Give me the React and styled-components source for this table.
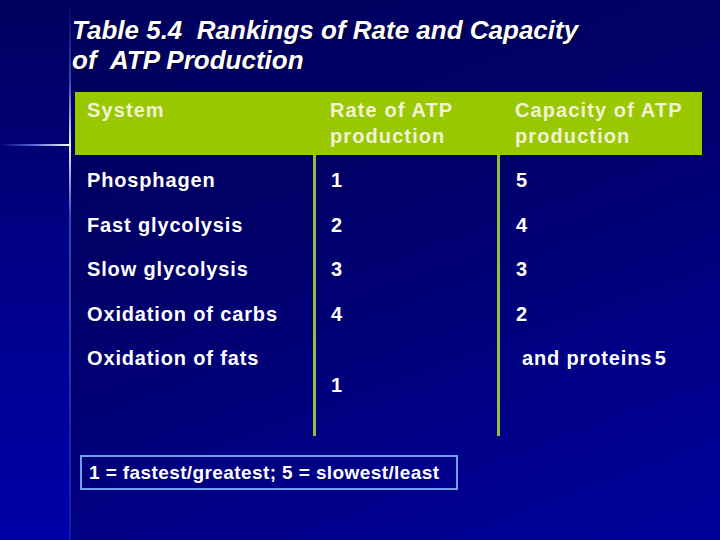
import React from 'react';
import styled, { createGlobalStyle } from 'styled-components';

const GlobalStyle = createGlobalStyle`
    html, body {
        margin: 0;
        padding: 0;
    }
    body {
        font-family: "Liberation Sans", Arial, sans-serif;
        background: #00006a;
    }
`;

const rows = [
    { system: 'Phosphagen', rate: '1', capacity: '5' },
    { system: 'Fast glycolysis', rate: '2', capacity: '4' },
    { system: 'Slow glycolysis', rate: '3', capacity: '3' },
    { system: 'Oxidation of carbs', rate: '4', capacity: '2' },
];

const App = () => {
    return (
        <>
            <GlobalStyle />
            <Slide>
                <Strip />
                <Main>
                    <Title>
                        Table 5.4&nbsp; Rankings of Rate and Capacity
                        <br />
                        of&nbsp; ATP Production
                    </Title>
                    <Table>
                        <HeadCell>System</HeadCell>
                        <HeadCell $pad={15}>
                            Rate of ATP
                            <br />
                            production
                        </HeadCell>
                        <HeadCell $pad={16}>
                            Capacity of ATP
                            <br />
                            production
                        </HeadCell>

                        {rows.map((r) => (
                            <React.Fragment key={r.system}>
                                <Cell>{r.system}</Cell>
                                <Cell $pad={15} $line>
                                    {r.rate}
                                </Cell>
                                <Cell $pad={16} $line>
                                    {r.capacity}
                                </Cell>
                            </React.Fragment>
                        ))}

                        <Cell $last>Oxidation of fats</Cell>
                        <Cell $pad={15} $line $last $top={41}>
                            1
                        </Cell>
                        <Cell $pad={22} $line $last>
                            and proteins&#8202;5
                        </Cell>
                    </Table>
                    <Legend>1 = fastest/greatest; 5 = slowest/least</Legend>
                </Main>
            </Slide>
        </>
    );
};

const Slide = styled.div`
    width: 720px;
    height: 540px;
    overflow: hidden;
    display: flex;
    background: linear-gradient(160deg, #00005c 0%, #000068 40%, #000088 75%, #00009a 100%);
`;

const Strip = styled.div`
    position: relative;
    flex: 0 0 70px;
    background: linear-gradient(180deg, #00005e 0%, #000084 45%, #0000a8 100%);

    /* glowing cross */
    &::before {
        content: '';
        position: absolute;
        right: -1px;
        top: 0;
        bottom: 0;
        width: 2px;
        background: linear-gradient(
            180deg,
            rgba(90, 120, 255, 0) 0%,
            rgba(110, 140, 255, 0.5) 15%,
            rgba(240, 240, 255, 1) 27%,
            rgba(110, 140, 255, 0.5) 40%,
            rgba(60, 80, 240, 0.3) 100%
        );
    }
    &::after {
        content: '';
        position: absolute;
        left: 0;
        right: -1px;
        top: 144px;
        height: 2px;
        background: linear-gradient(90deg, rgba(60, 90, 255, 0) 0%, rgba(120, 150, 255, 0.75) 50%, #ffffff 100%);
    }
`;

const Main = styled.div`
    flex: 1;
    display: flex;
    flex-direction: column;
    align-items: flex-start;
    padding: 15px 0 0 2px;
`;

const Title = styled.h1`
    margin: 0;
    font-family: "Liberation Sans", Arial, sans-serif;
    font-size: 26px;
    line-height: 30px;
    font-weight: bold;
    font-style: italic;
    color: #ffffff;
    text-shadow: 1px 1px 1px rgba(0, 0, 0, 0.6);
    white-space: nowrap;
`;

const Table = styled.div`
    margin: 17px 0 0 3px;
    display: grid;
    grid-template-columns: 240px 184px 203px;
    font-size: 20px;
    font-weight: bold;
`;

const HeadCell = styled.div`
    background: #99c800;
    color: #f2f2d6;
    height: 63px;
    box-sizing: border-box;
    padding: 5px 0 0 ${(p) => p.$pad || 12}px;
    line-height: 26px;
    letter-spacing: 1.1px;
    white-space: nowrap;
`;

const Cell = styled.div`
    color: #ffffff;
    height: ${(p) => (p.$last ? 103 : 44.5)}px;
    box-sizing: border-box;
    padding: ${(p) => p.$top || 14}px 0 0 ${(p) => p.$pad || 12}px;
    line-height: 22px;
    letter-spacing: 0.85px;
    border-left: ${(p) => (p.$line ? '3px solid #8fbf3c' : 'none')};
    margin-left: ${(p) => (p.$line ? '-2px' : '0')};
    white-space: nowrap;
`;

const Legend = styled.div`
    margin: 19px 0 0 8px;
    border: 2px solid #6f9ff0;
    padding: 5px 17px 5px 7px;
    color: #ffffff;
    font-size: 19px;
    font-weight: bold;
    line-height: 21px;
    letter-spacing: 0.4px;
    white-space: nowrap;
`;

export default App;
